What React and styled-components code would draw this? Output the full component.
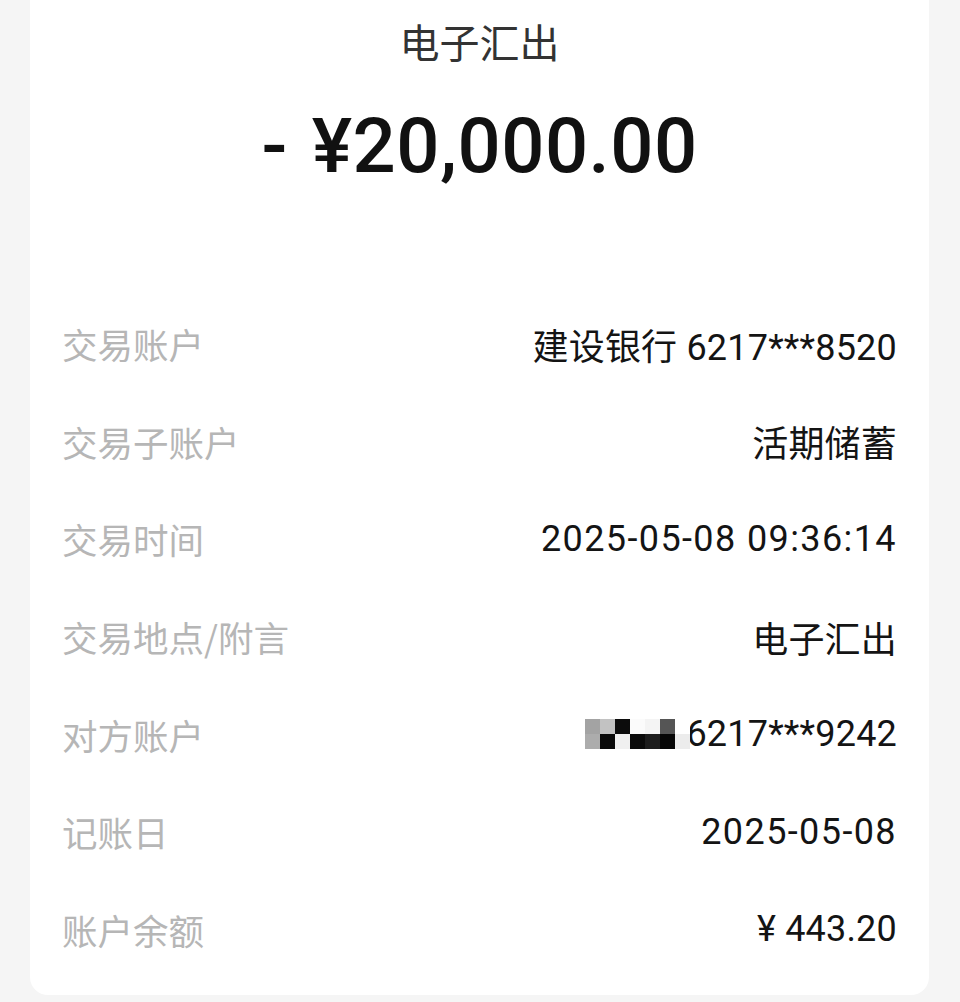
import React from "react";
import styled, { createGlobalStyle } from "styled-components";

const GlobalStyle = createGlobalStyle`
  html, body {
    margin: 0;
    padding: 0;
    background: #f5f5f5;
  }
  body {
    font-family: Roboto, "Noto Sans CJK SC", sans-serif;
    -webkit-font-smoothing: antialiased;
  }
`;

const Page = styled.div`
  min-height: 1002px;
  padding: 0 31px 7px 30px;
  box-sizing: border-box;
`;

const Card = styled.section`
  background: #ffffff;
  border-radius: 0 0 18px 18px;
  padding: 15px 32px 17px;
  display: flex;
  flex-direction: column;
`;

const Title = styled.h1`
  margin: 0;
  text-align: center;
  font-family: "Noto Sans CJK SC", sans-serif;
  font-weight: 400;
  font-size: 40px;
  line-height: 52px;
  color: #333333;
`;

const Amount = styled.div`
  margin-top: 34px;
  text-align: center;
  font-family: Roboto, sans-serif;
  font-weight: 500;
  font-size: 76px;
  line-height: 90px;
  color: #111111;
  letter-spacing: 0.5px;
`;

const Sign = styled.span`
  margin-right: 24px;
`;

const Details = styled.dl`
  margin: 104px 0 0;
  display: flex;
  flex-direction: column;
`;

const Row = styled.div`
  height: 97.6px;
  display: flex;
  align-items: center;
  justify-content: space-between;
`;

const Label = styled.dt`
  font-family: "Noto Sans CJK SC", sans-serif;
  font-size: 35.5px;
  color: #b6b6b6;
  white-space: nowrap;
`;

const Value = styled.dd`
  margin: 0;
  display: flex;
  align-items: center;
  font-family: Roboto, "Noto Sans CJK SC", sans-serif;
  font-size: 36px;
  letter-spacing: ${(p) => (p.$spaced ? "1.4px" : "0.2px")};
  color: #141414;
  white-space: nowrap;
`;

const MaskBox = styled.svg`
  display: block;
  width: 105px;
  height: 30px;
  margin-right: -4px;
  position: relative;
  z-index: 1;
`;

// Mosaic used to hide the counterparty's name
const mosaic = [
  ["#a3a3a3", "#c2c2c2", "#0c0c0c", "#fbfbfb", "#f4f4f4", "#555555", "#ffffff"],
  ["#acacac", "#0a0a0a", "#f0f0f0", "#0b0b0b", "#1d1d1d", "#060606", "#ececec"],
];

function Mosaic() {
  return (
    <MaskBox viewBox="0 0 105 30" aria-hidden="true">
      {mosaic.map((line, r) =>
        line.map((fill, c) => (
          <rect key={`${r}-${c}`} x={c * 15} y={r * 15} width={15} height={15} fill={fill} />
        ))
      )}
    </MaskBox>
  );
}

const rows = [
  { label: "交易账户", value: "建设银行 6217***8520" },
  { label: "交易子账户", value: "活期储蓄" },
  { label: "交易时间", value: "2025-05-08 09:36:14", spaced: true },
  { label: "交易地点/附言", value: "电子汇出" },
  { label: "对方账户", value: "6217***9242", masked: true },
  { label: "记账日", value: "2025-05-08", spaced: true },
  { label: "账户余额", value: "¥ 443.20" },
];

export default function App() {
  return (
    <>
      <GlobalStyle />
      <Page>
        <Card>
          <Title>电子汇出</Title>
          <Amount>
            <Sign>-</Sign>¥20,000.00
          </Amount>
          <Details>
            {rows.map((row) => (
              <Row key={row.label}>
                <Label>{row.label}</Label>
                <Value $spaced={row.spaced}>
                  {row.masked && <Mosaic />}
                  {row.value}
                </Value>
              </Row>
            ))}
          </Details>
        </Card>
      </Page>
    </>
  );
}
